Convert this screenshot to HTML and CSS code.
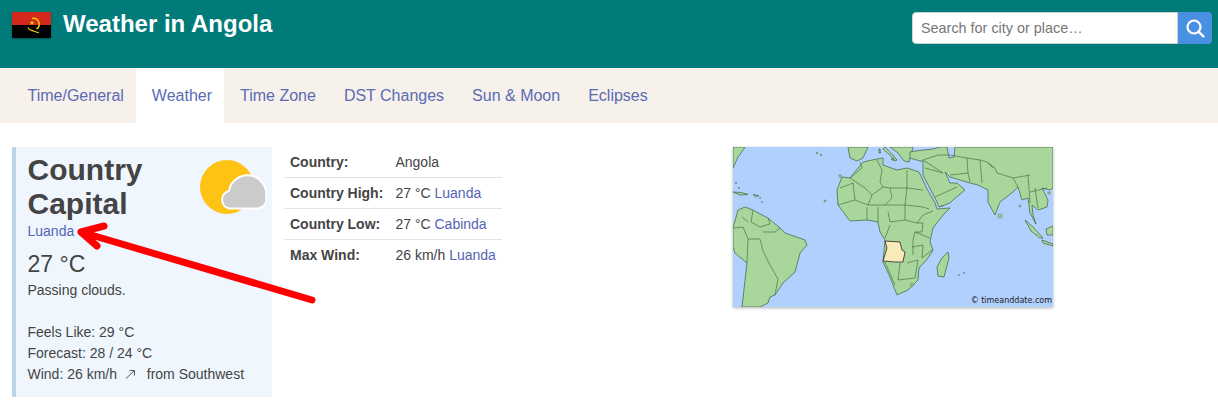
FILE: index.html
```html
<!DOCTYPE html>
<html lang="en">
<head>
<meta charset="utf-8">
<title>Weather in Angola</title>
<link rel="stylesheet" href="styles.css">
</head>
<body>
<header class="top">
  <div class="brand">
    <svg class="flag" viewBox="0 0 39 26" width="39" height="26">
      <rect width="39" height="13" fill="#d3281c"/>
      <rect y="13" width="39" height="13" fill="#000"/>
      <path d="M20 6.500a5.800 5.800 0 0 1 4.500 10.500" fill="none" stroke="#f5c900" stroke-width="1.600"/>
      <path d="M16 15.500c1.500 2.500 3.500 3.500 6 3.500M17.500 17.500l9.500 3.500" fill="none" stroke="#f5c900" stroke-width="1.300"/>
      <path d="M20 8.500l.7 1.600 1.700.1-1.300 1.100.4 1.700-1.500-.9-1.500.9.4-1.700-1.300-1.100 1.700-.1z" fill="#f5c900"/>
    </svg>
    <h1 class="title">Weather in Angola</h1>
  </div>
  <form class="search">
    <input class="search-input" type="text" placeholder="Search for city or place…">
    <button class="search-btn" type="button" aria-label="Search">
      <svg viewBox="0 0 20 20" width="20" height="20"><circle cx="9" cy="9" r="6.500" fill="none" stroke="#fff" stroke-width="2.200"/><path d="M13.800 13.800l4.600 4.600" stroke="#fff" stroke-width="2.400" stroke-linecap="round"/></svg>
    </button>
  </form>
</header>
<nav class="nav">
  <a class="nav-item" href="#">Time/General</a>
  <a class="nav-item active" href="#">Weather</a>
  <a class="nav-item" href="#">Time Zone</a>
  <a class="nav-item" href="#">DST Changes</a>
  <a class="nav-item" href="#">Sun &amp; Moon</a>
  <a class="nav-item" href="#">Eclipses</a>
</nav>
<main class="content">
  <section class="card">
    <svg class="wx-icon" viewBox="0 0 68 56" width="68" height="56">
      <circle cx="27" cy="27" r="27" fill="#ffc316"/>
      <path d="M29 48.500A9 9 0 0 1 29 31 A15.500 15.500 0 0 1 66 37 A9 9 0 0 1 58 48.500Z" fill="#cbcbcb" stroke="#fff" stroke-width="2"/>
    </svg>
    <h2 class="card-title">Country<br>Capital</h2>
    <a class="link" href="#">Luanda</a>
    <div class="temp">27 °C</div>
    <p class="line">Passing clouds.</p>
    <p class="line spaced">Feels Like: 29 °C</p>
    <p class="line">Forecast: 28 / 24 °C</p>
    <p class="line">Wind: 26 km/h <svg class="wind" viewBox="0 0 12 12" width="12" height="12"><path d="M2 10.500L10 3M5.500 2.500H10.500V7.500" fill="none" stroke="#555" stroke-width="1"/></svg> from Southwest</p>
  </section>
  <table class="stats">
    <tr><th>Country:</th><td>Angola</td></tr>
    <tr><th>Country High:</th><td>27 °C <a class="link" href="#">Luanda</a></td></tr>
    <tr><th>Country Low:</th><td>27 °C <a class="link" href="#">Cabinda</a></td></tr>
    <tr><th>Max Wind:</th><td>26 km/h <a class="link" href="#">Luanda</a></td></tr>
  </table>
  <figure class="map">
    <svg viewBox="0 0 320 160" width="320" height="160">
      <rect width="320" height="160" fill="#b0d0fd"/>
      <g fill="#a9d79b" stroke="#3d5f3d" stroke-width=".7" stroke-linejoin="round">
        <path d="M0 0H12L8 6 5 10 0 21z"/>
        <path d="M0 81L5 63 12 60 20 63 29 68 35 71 47 81 52 86 72 93 74 98 67 106 62 125 50 136 42 148 37 150 35 156 27 160H9L14 116 2 106 0 100z"/>
        <path d="M104 43L109 30 117 31 130 15 144 12 150 11 150 18 164 23 174 21 186 25 194 42 202 56 204 62 217 61 210 68 200 81 197 95 200 103 195 111 186 121 185 133 175 143 164 148 157 130 150 115 152 93 147 85 145 75 134 73 117 74 105 58z"/>
        <path d="M115 0L117 11 124 14 130 11 135 0z"/>
        <path d="M152 0L160 8 164 13 162 14 157 8 150 2z"/>
        <path d="M157 0L165 6 171 14 176 15 178 8 180 0z"/>
        <path d="M177 5L182 4 200 2 207 0H214L216 11 221 10 222 0H320V41L317 43 309 41 315 53 314 60 305 63 299 58 300 68 303 77 297 66 295 51 289 53 285 40 280 45 267 55 262 68 255 55 255 43 245 38 237 36 217 30 212 25 217 36 224 36 232 43 220 53 217 56 206 60 204 55 190 28 190 14 187 14 177 11z"/>
        <path d="M215 105L216 111 211 130 205 129 204 120 209 111z"/>
        <path d="M292 73L300 80 310 91 307 91 298 84z"/>
        <path d="M309 93L320 97V99L310 96z"/>
        <path d="M314 88L313 82 320 79V88z"/>
        <path d="M0 45l8 .5 7 2-8 .5zM20 47.500l6 1-3 1.500z"/>
        <path d="M146 2l1 0 .5 4-1.500 0zM158 12l3-.5-.5 2z"/>
      </g>
      <path d="M152 94L167 95 169 103 172 105 170 115 162 115 150 114 154 101z" fill="#f8ebb9" stroke="#222" stroke-width=".8"/>
      <g fill="none" stroke="#3d5f3d" stroke-width=".6">
        <path d="M0 81L10 80 15 92 27 92 30 104 37 118 45 132 42 148M20 63L18 75 27 80 37 77 35 71M30 85L42 85 47 81M15 92L14 116M9 70L15 75"/>
        <path d="M117 31L132 41 139 48 150 40 157 41 174 41 174 23M144 13L149 23 147 35 150 40M127 15L129 21 117 31M139 48L135 58M157 41L159 51 152 58M120 36L122 53M174 41L190 43M174 41L172 58M107 41L120 36M105 58L122 53 135 58 152 58 172 58 190 60 196 62"/>
        <path d="M155 65L157 75 172 73 184 76 190 76 189 85 182 85 180 93 180 108M157 78L152 91M172 58L172 73M184 76L190 68 200 64M152 115L162 138M167 116L165 133 182 131 185 113 174 116M182 85L197 91M179 100L190 98 189 111 199 103M134 60V73M145 60V75"/>
        <path d="M234 11L235 26 237 35M234 11L247 13 254 15 262 21 264 26 280 31 297 28M255 16L260 21M247 13L249 36M217 8L234 11M217 28L235 26M280 31L285 40M295 28L297 56M297 45L314 41M302 41L305 61M190 13L210 26M192 21L210 26M202 50L224 40M190 13L205 8 217 8"/>
      </g>
      <g fill="#a9d79b" stroke="#3d5f3d" stroke-width=".5">
        <circle cx="84" cy="6" r=".9"/><circle cx="88" cy="8" r=".8"/><circle cx="107" cy="29" r="1.200"/><circle cx="92" cy="54" r="1"/><circle cx="287" cy="59" r=".9"/><circle cx="209" cy="59" r=".7"/>
        <circle cx="267" cy="69" r="2"/><circle cx="316" cy="46" r="1.200"/><circle cx="179" cy="138" r="1.500"/><circle cx="27" cy="51" r=".6"/><circle cx="29" cy="55" r=".6"/><circle cx="3" cy="36" r=".7"/><circle cx="6" cy="41" r=".7"/><circle cx="231" cy="126" r=".6"/><circle cx="226" cy="128" r=".6"/>
      </g>
    </svg>
    <figcaption class="credit">© timeanddate.com</figcaption>
  </figure>
</main>
<svg class="arrow" viewBox="0 0 1218 400" width="1218" height="400" aria-hidden="true">
  <path d="M312 300L81 232M104 226L81 232 97 246" fill="none" stroke="#ff0000" stroke-width="7" stroke-linecap="round" stroke-linejoin="round"/>
</svg>
</body>
</html>
```
FILE: styles.css
```css
* { box-sizing: border-box; }
html, body { margin: 0; padding: 0; }
body {
  position: relative;
  height: 400px;
  overflow: hidden;
  background: #fff;
  color: #444;
  font-family: "Liberation Sans", Arial, sans-serif;
  font-size: 14px;
}
.top {
  height: 68px;
  background: #007b79;
  display: flex;
  justify-content: space-between;
  align-items: flex-start;
  padding: 12px 6px 0 12px;
}
.brand { display: flex; align-items: flex-start; gap: 12px; }
.flag { display: block; box-shadow: 0 1px 2px rgba(0,0,0,.3); }
.title {
  margin: 0;
  color: #fff;
  font-size: 24px;
  line-height: 24px;
  font-weight: 700;
}
.search { display: flex; height: 32px; }
.search-input {
  width: 266px;
  height: 32px;
  border: 1px solid #c9d4d4;
  border-radius: 4px 0 0 4px;
  padding: 0 8px;
  font: 14.4px "Liberation Sans", Arial, sans-serif;
  background: #fff;
  outline: none;
}
.search-input::placeholder { color: #757575; opacity: 1; }
.search-btn {
  width: 34px;
  height: 32px;
  border: 0;
  border-radius: 0 4px 4px 0;
  padding: 0;
  background: #4a90e2;
  display: flex;
  align-items: center;
  justify-content: center;
}
.nav {
  height: 55px;
  background: #f6f1ea;
  display: flex;
  padding-left: 11.5px;
}
.nav-item {
  padding: 0 12px 0 16px;
  line-height: 55px;
  font-size: 16px;
  color: #5b6bb5;
  text-decoration: none;
}
.nav-item.active { background: #fff; }
.content {
  display: flex;
  align-items: flex-start;
  padding: 24px 0 0 12px;
}
.card {
  position: relative;
  width: 260px;
  height: 250px;
  background: #eff6fd;
  border-left: 4px solid #bdd3e6;
  padding: 6px 12px 0 11.5px;
}
.wx-icon { position: absolute; left: 184px; top: 13px; }
.card-title {
  margin: 0;
  font-size: 30px;
  line-height: 34px;
  font-weight: 700;
  color: #444;
}
.link { color: #5364b4; text-decoration: none; }
.card > .link { display: block; line-height: 20px; font-size: 14px; }
.temp {
  font-size: 23px;
  line-height: 28px;
  margin-top: 9px;
}
.line { margin: 0; line-height: 21px; font-size: 14px; }
.temp + .line { margin-top: 2px; }
.spaced { margin-top: 21px; }
.wind { margin: 0 7px 0 3px; vertical-align: -1px; }
.stats {
  margin-left: 12px;
  width: 218px;
  border-collapse: collapse;
  font-size: 14px;
}
.stats th, .stats td {
  height: 31px;
  padding: 0 6px;
  text-align: left;
  white-space: nowrap;
  border-bottom: 1px solid #e4e4e4;
}
.stats tr:first-child th, .stats tr:first-child td { height: 30px; }
.stats tr:last-child th, .stats tr:last-child td { border-bottom: 0; }
.stats th { font-weight: 700; }
.map {
  position: relative;
  margin: 0 0 0 231px;
  width: 320px;
  height: 160px;
  box-shadow: 0 1px 3px rgba(0,0,0,.3);
}
.map svg { display: block; }
.credit {
  position: absolute;
  right: 1px;
  bottom: 0;
  font-family: "DejaVu Sans", sans-serif;
  font-size: 8px;
  line-height: 12px;
  color: #222;
}
.arrow { position: absolute; left: 0; top: 0; pointer-events: none; }
```
